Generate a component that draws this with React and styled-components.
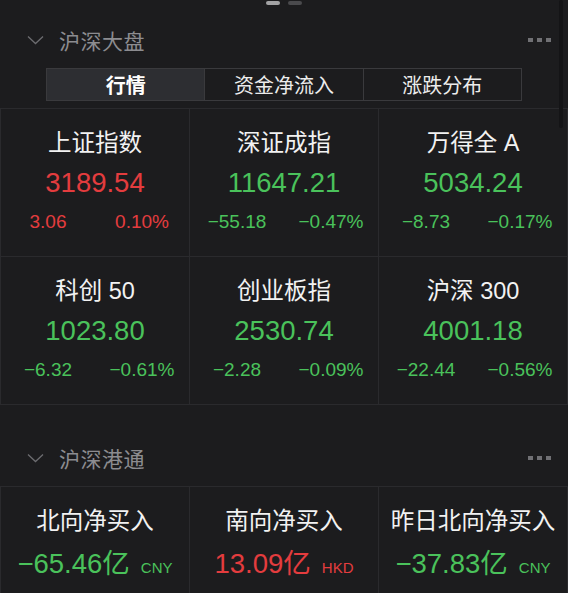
import styled, { createGlobalStyle } from "styled-components"

const RED = "#e43c3e"
const GREEN = "#4ac25b"

const GlobalStyle = createGlobalStyle`
    body {
        margin: 0;
        background: #1c1c1e;
        font-family: "Liberation Sans", "Noto Sans CJK SC", sans-serif;
    }
`

const indices = [
    { name: "上证指数", value: "3189.54", change: "3.06", pct: "0.10%", up: true },
    { name: "深证成指", value: "11647.21", change: "−55.18", pct: "−0.47%", up: false },
    { name: "万得全 A", value: "5034.24", change: "−8.73", pct: "−0.17%", up: false },
    { name: "科创 50", value: "1023.80", change: "−6.32", pct: "−0.61%", up: false },
    { name: "创业板指", value: "2530.74", change: "−2.28", pct: "−0.09%", up: false },
    { name: "沪深 300", value: "4001.18", change: "−22.44", pct: "−0.56%", up: false },
]

const flows = [
    { name: "北向净买入", value: "−65.46", unit: "CNY", up: false },
    { name: "南向净买入", value: "13.09", unit: "HKD", up: true },
    { name: "昨日北向净买入", value: "−37.83", unit: "CNY", up: false },
]

function Chevron() {
    return (
        <svg width="17" height="10" viewBox="0 0 17 10" fill="none">
            <path d="M1 1.5 L8.5 8.5 L16 1.5" stroke="#6c6c70" strokeWidth="1.3" />
        </svg>
    )
}

function SectionHeader({ title, top }) {
    return (
        <Header $top={top}>
            <Chevron />
            <HeaderTitle>{title}</HeaderTitle>
            <MoreDots>
                <i /><i /><i />
            </MoreDots>
        </Header>
    )
}

export default function App() {
    return (
        <Page>
            <GlobalStyle />
            <ScrollThumb />
            <Indicator>
                <Pill $active />
                <Pill />
            </Indicator>

            <SectionHeader title="沪深大盘" />
            <Tabs>
                <Tab $active>行情</Tab>
                <Tab>资金净流入</Tab>
                <Tab>涨跌分布</Tab>
            </Tabs>

            <Grid>
                {indices.map((it) => (
                    <Cell key={it.name}>
                        <Name>{it.name}</Name>
                        <Value $up={it.up}>{it.value}</Value>
                        <ChangeRow $up={it.up}>
                            <span>{it.change}</span>
                            <span>{it.pct}</span>
                        </ChangeRow>
                    </Cell>
                ))}
            </Grid>

            <SectionHeader title="沪深港通" top={25} />
            <Grid>
                {flows.map((it) => (
                    <Cell key={it.name}>
                        <Name>{it.name}</Name>
                        <FlowValue $up={it.up}>
                            {it.value}亿
                            <Unit>{it.unit}</Unit>
                        </FlowValue>
                    </Cell>
                ))}
            </Grid>
        </Page>
    )
}

const Page = styled.div`
    position: relative;
    width: 568px;
    height: 593px;
    overflow: hidden;
    background: #1c1c1e;
`

const ScrollThumb = styled.div`
    position: absolute;
    top: 0;
    right: 5px;
    width: 4px;
    height: 128px;
    border-radius: 2px;
    background: #141416;
`

const Indicator = styled.div`
    display: flex;
    justify-content: center;
    gap: 8px;
    height: 12px;
    padding-top: 1px;
    box-sizing: border-box;
`

const Pill = styled.div`
    width: 14px;
    height: 4px;
    border-radius: 2px;
    background: ${(p) => (p.$active ? "#a2a2a4" : "#4a4a4d")};
`

const Header = styled.div`
    display: flex;
    align-items: center;
    height: 56px;
    margin-top: ${(p) => p.$top || 0}px;
    padding: 0 17px 0 27px;
    gap: 15px;
`

const HeaderTitle = styled.div`
    flex: 1;
    font-size: 21px;
    color: #8c8c90;
    letter-spacing: 0.5px;
`

const MoreDots = styled.div`
    display: flex;
    gap: 4px;
    i {
        width: 5px;
        height: 4px;
        background: #707074;
    }
`

const Tabs = styled.div`
    display: flex;
    height: 33px;
    margin: 0 46px 7px;
    border: 1px solid #3a3a3d;
    box-sizing: border-box;
`

const Tab = styled.div`
    flex: 1;
    display: flex;
    align-items: center;
    justify-content: center;
    font-size: 20px;
    color: ${(p) => (p.$active ? "#ffffff" : "#ececec")};
    font-weight: ${(p) => (p.$active ? 600 : 400)};
    background: ${(p) => (p.$active ? "#2d2e32" : "transparent")};
    & + & {
        border-left: 1px solid #3a3a3d;
    }
`

const Grid = styled.div`
    display: grid;
    grid-template-columns: 188px 188px 188px;
    grid-auto-rows: 147px;
    gap: 1px;
    padding: 1px;
    background: #2a2a2d;
`

const Cell = styled.div`
    display: flex;
    flex-direction: column;
    align-items: center;
    background: #1c1c1e;
    padding-top: 19px;
    box-sizing: border-box;
`

const Name = styled.div`
    font-size: 23.5px;
    line-height: 30px;
    color: #f2f2f2;
    white-space: nowrap;
`

const Value = styled.div`
    margin-top: 9px;
    font-size: 27.5px;
    line-height: 32px;
    color: ${(p) => (p.$up ? RED : GREEN)};
`

const ChangeRow = styled.div`
    display: grid;
    grid-template-columns: 1fr 1fr;
    width: 100%;
    margin-top: 11px;
    font-size: 19px;
    line-height: 24px;
    text-align: center;
    color: ${(p) => (p.$up ? RED : GREEN)};
`

const FlowValue = styled.div`
    display: flex;
    align-items: baseline;
    margin-top: 12px;
    font-size: 27.5px;
    line-height: 32px;
    color: ${(p) => (p.$up ? RED : GREEN)};
    white-space: nowrap;
`

const Unit = styled.span`
    margin-left: 11px;
    font-size: 15px;
`
